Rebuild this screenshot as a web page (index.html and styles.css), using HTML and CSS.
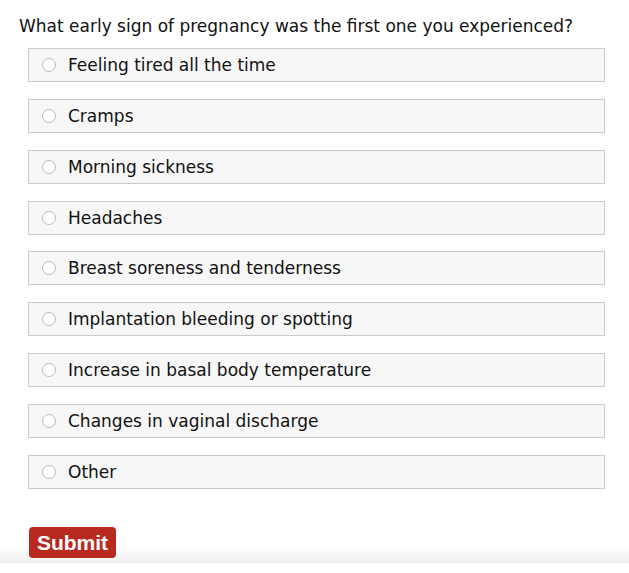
FILE: index.html
```html
<!DOCTYPE html>
<html>
<head>
<meta charset="utf-8">
<link rel="stylesheet" href="styles.css">
</head>
<body>
<div class="page">
  <p class="question">What early sign of pregnancy was the first one you experienced?</p>
  <div class="options">
    <label class="option"><span class="radio"></span><span class="label">Feeling tired all the time</span></label>
    <label class="option"><span class="radio"></span><span class="label">Cramps</span></label>
    <label class="option"><span class="radio"></span><span class="label">Morning sickness</span></label>
    <label class="option"><span class="radio"></span><span class="label">Headaches</span></label>
    <label class="option"><span class="radio"></span><span class="label">Breast soreness and tenderness</span></label>
    <label class="option"><span class="radio"></span><span class="label">Implantation bleeding or spotting</span></label>
    <label class="option"><span class="radio"></span><span class="label">Increase in basal body temperature</span></label>
    <label class="option"><span class="radio"></span><span class="label">Changes in vaginal discharge</span></label>
    <label class="option"><span class="radio"></span><span class="label">Other</span></label>
  </div>
  <div class="footer">
    <button class="submit">Submit</button>
  </div>
</div>
</body>
</html>
```
FILE: styles.css
```css
html, body {
  margin: 0;
  padding: 0;
  background: #fff;
}
.page {
  font-family: "DejaVu Sans", Verdana, sans-serif;
  color: #111;
  padding-top: 16px;
}
.question {
  margin: 0 0 12px 19px;
  font-size: 17px;
  line-height: 20px;
}
.options {
  display: flex;
  flex-direction: column;
  gap: 16.85px;
  margin-left: 28px;
  width: 577px;
}
.option {
  display: flex;
  align-items: center;
  box-sizing: border-box;
  height: 34px;
  border: 1px solid #cbcbcb;
  background: #f7f7f7;
  padding-left: 13px;
  font-size: 17px;
}
.radio {
  box-sizing: border-box;
  width: 14px;
  height: 14px;
  border: 1px solid #b9b9b9;
  border-radius: 50%;
  background: #fff;
  margin-right: 12px;
  flex: none;
}
.label {
  line-height: 20px;
}
.footer {
  margin-top: 38px;
  padding: 0 0 0 29px;
  height: 46px;
  background: linear-gradient(to bottom, #fff 0px, #fff 18px, #f0f0f0 36px);
  background-size: 100% 36px;
  background-repeat: no-repeat;
}
.submit {
  display: block;
  width: 87px;
  height: 31px;
  border: none;
  border-radius: 4px;
  background: #b8291f;
  color: #fff;
  font-family: "Liberation Sans", Arial, sans-serif;
  font-weight: bold;
  font-size: 21px;
  padding: 0;
  line-height: 31px;
}
```
